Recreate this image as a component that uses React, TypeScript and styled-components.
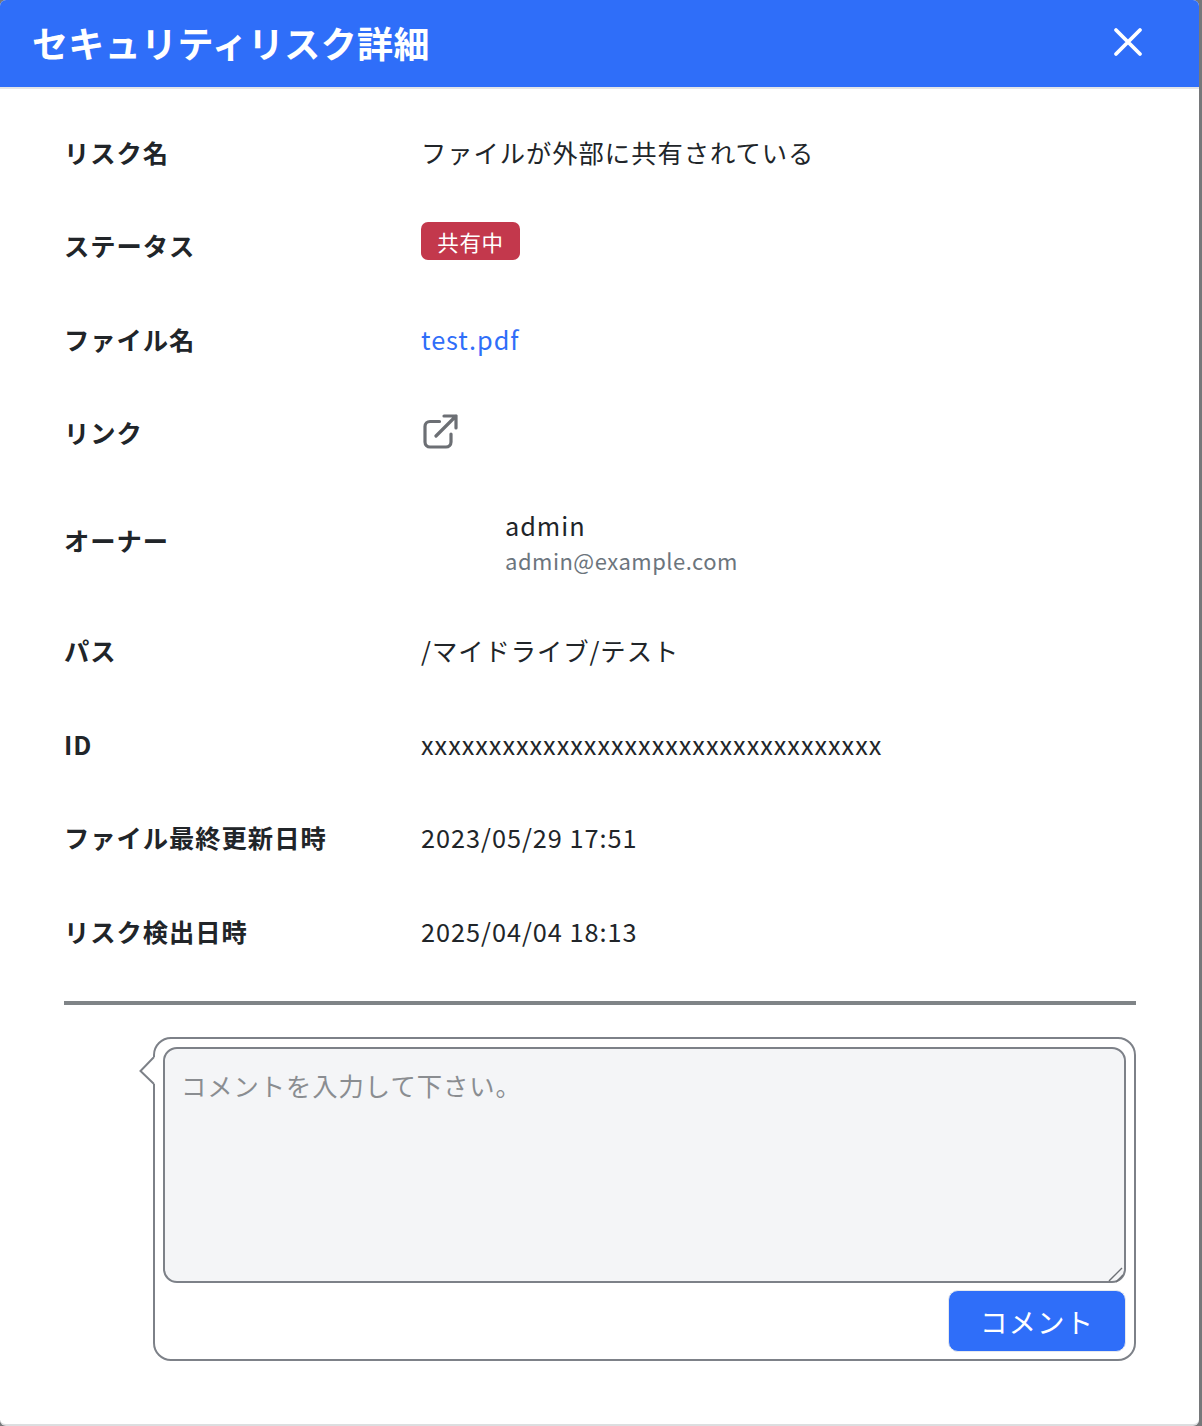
import React from "react";
import styled, { createGlobalStyle } from "styled-components";

const Global = createGlobalStyle`
  html, body { margin: 0; padding: 0; background: #76787a; }
  body { font-family: "Noto Sans CJK JP", "Noto Sans", sans-serif; color: #212529; }
  * { box-sizing: border-box; }
`;

const Modal = styled.div`
  width: 1199px;
  height: 1426px;
  background: #fff;
  border-bottom: 2px solid #dcdee0;
  border-radius: 6px;
  overflow: hidden;
  display: flex;
  flex-direction: column;
`;

const Header = styled.header`
  height: 89px;
  flex: none;
  background: #2f6ef9;
  border-bottom: 2px solid #e3e5e8;
  display: flex;
  align-items: center;
  justify-content: space-between;
  padding: 0 56px 4px 32px;
`;

const Title = styled.h1`
  margin: 0;
  font-size: 36px;
  line-height: 50px;
  font-weight: 700;
  letter-spacing: 0.36px;
  color: #fff;
`;

const CloseButton = styled.button`
  border: 0;
  padding: 0;
  background: none;
  width: 30px;
  height: 30px;
  display: flex;
`;

const Body = styled.div`
  padding: 45px 63px 0 64px;
`;

const Row = styled.div<{ $mt?: number }>`
  display: grid;
  grid-template-columns: 357px 1fr;
  align-items: center;
  margin-top: ${(p) => p.$mt ?? 0}px;
`;

const Label = styled.div`
  font-size: 25.3px;
  letter-spacing: 0.97px;
  font-weight: 700;
  line-height: 36px;
`;

const Value = styled.div`
  display: flex;
  align-items: center;
  height: 36px;
  font-size: 25.3px;
  letter-spacing: 0.97px;
  line-height: 36px;
  font-weight: 400;
`;

const Badge = styled.span`
  display: inline-flex;
  align-items: center;
  justify-content: center;
  width: 99px;
  height: 38px;
  margin-top: -8px;
  padding-top: 1px;
  border-radius: 7px;
  background: #c3384c;
  color: #fff;
  font-size: 21.5px;
  letter-spacing: 0.7px;
`;

const FileLink = styled.a`
  color: #2f6ef9;
  text-decoration: none;
`;

const IconLink = styled.a`
  display: flex;
  color: #6c6f74;
  margin-left: 2px;
`;

const Owner = styled.div`
  padding: 2px 0 0 84px;
  margin-bottom: -2px;
`;

const OwnerName = styled.div`
  font-size: 25.3px;
  letter-spacing: 0.97px;
  line-height: 36px;
`;

const OwnerMail = styled.div`
  font-size: 22px;
  letter-spacing: 0.5px;
  line-height: 34px;
  color: #6c757d;
`;

const Divider = styled.hr`
  margin: 52px 0 0;
  border: 0;
  border-top: 4px solid #7f8487;
`;

const CommentBox = styled.form`
  position: relative;
  margin: 32px 0 0 89px;
  height: 324px;
  border: 2px solid #7d8188;
  border-radius: 18px;
  padding: 8px;
  display: flex;
  flex-direction: column;
`;

const Tail = styled.svg`
  position: absolute;
  left: -16px;
  top: 18px;
`;

const TextAreaWrap = styled.div`
  position: relative;
  flex: none;
  height: 236px;
`;

const TextArea = styled.textarea`
  display: block;
  width: 100%;
  height: 100%;
  resize: none;
  border: 2px solid #7d8188;
  border-radius: 14px;
  background: #f4f5f7;
  padding: 17px 16px;
  font-family: inherit;
  font-size: 25.3px;
  letter-spacing: 0.97px;
  line-height: 38px;
  color: #212529;
  outline: none;
  &::placeholder { color: #8a8d91; opacity: 1; }
`;

const Grip = styled.svg`
  position: absolute;
  right: 1px;
  bottom: 0;
  pointer-events: none;
`;

const Actions = styled.div`
  display: flex;
  justify-content: flex-end;
  margin-top: 7px;
`;

const SubmitButton = styled.button`
  width: 178px;
  height: 62px;
  border: 1px solid #e6e9ee;
  border-radius: 10px;
  background: #2f6ef9;
  color: #fff;
  font-family: inherit;
  font-size: 27.5px;
  letter-spacing: 1px;
  font-weight: 400;
`;

export default function App() {
  return (
    <>
      <Global />
      <Modal>
        <Header>
          <Title>セキュリティリスク詳細</Title>
          <CloseButton aria-label="閉じる">
            <svg width="30" height="30" viewBox="0 0 30 30" fill="none" stroke="#fff" strokeWidth="3.8" strokeLinecap="round">
              <path d="M3 3 L27 27 M27 3 L3 27" />
            </svg>
          </CloseButton>
        </Header>
        <Body>
          <Row><Label>リスク名</Label><Value>ファイルが外部に共有されている</Value></Row>
          <Row $mt={57}><Label>ステータス</Label><Value><Badge>共有中</Badge></Value></Row>
          <Row $mt={58}><Label>ファイル名</Label><Value><FileLink href="#">test.pdf</FileLink></Value></Row>
          <Row $mt={57}>
            <Label>リンク</Label>
            <Value>
              <IconLink href="#" aria-label="リンク">
                <svg width="35" height="36" viewBox="0 0 35 36" fill="none" stroke="currentColor" strokeWidth="3.2" strokeLinecap="round" strokeLinejoin="round">
                  <path d="M16.5 7.5 H7 a5 5 0 0 0 -5 5 V28 a5 5 0 0 0 5 5 H23 a5 5 0 0 0 5 -5 V20" />
                  <path d="M13 22 L33 2 M21 2 H33 V14" />
                </svg>
              </IconLink>
            </Value>
          </Row>
          <Row $mt={55}>
            <Label>オーナー</Label>
            <Owner>
              <OwnerName>admin</OwnerName>
              <OwnerMail>admin@example.com</OwnerMail>
            </Owner>
          </Row>
          <Row $mt={57}><Label>パス</Label><Value>/マイドライブ/テスト</Value></Row>
          <Row $mt={58}><Label>ID</Label><Value>xxxxxxxxxxxxxxxxxxxxxxxxxxxxxxxxxx</Value></Row>
          <Row $mt={57}><Label>ファイル最終更新日時</Label><Value>2023/05/29 17:51</Value></Row>
          <Row $mt={58}><Label>リスク検出日時</Label><Value>2025/04/04 18:13</Value></Row>
          <Divider />
          <CommentBox>
            <Tail width="18" height="28" viewBox="0 0 18 28" fill="none">
              <path d="M15 0 L1.5 14 L15 27 L18 27 L18 0 Z" fill="#fff" />
              <path d="M15 0 L1.5 14 L15 27" stroke="#7d8188" strokeWidth="2" />
            </Tail>
            <TextAreaWrap>
              <TextArea placeholder="コメントを入力して下さい。" />
              <Grip width="18" height="18" viewBox="0 0 18 18" fill="none" stroke="#6d7075" strokeWidth="1.4">
                <path d="M2 16 L15 3 M9 17 L16 10" />
              </Grip>
            </TextAreaWrap>
            <Actions><SubmitButton type="button">コメント</SubmitButton></Actions>
          </CommentBox>
        </Body>
      </Modal>
    </>
  );
}
